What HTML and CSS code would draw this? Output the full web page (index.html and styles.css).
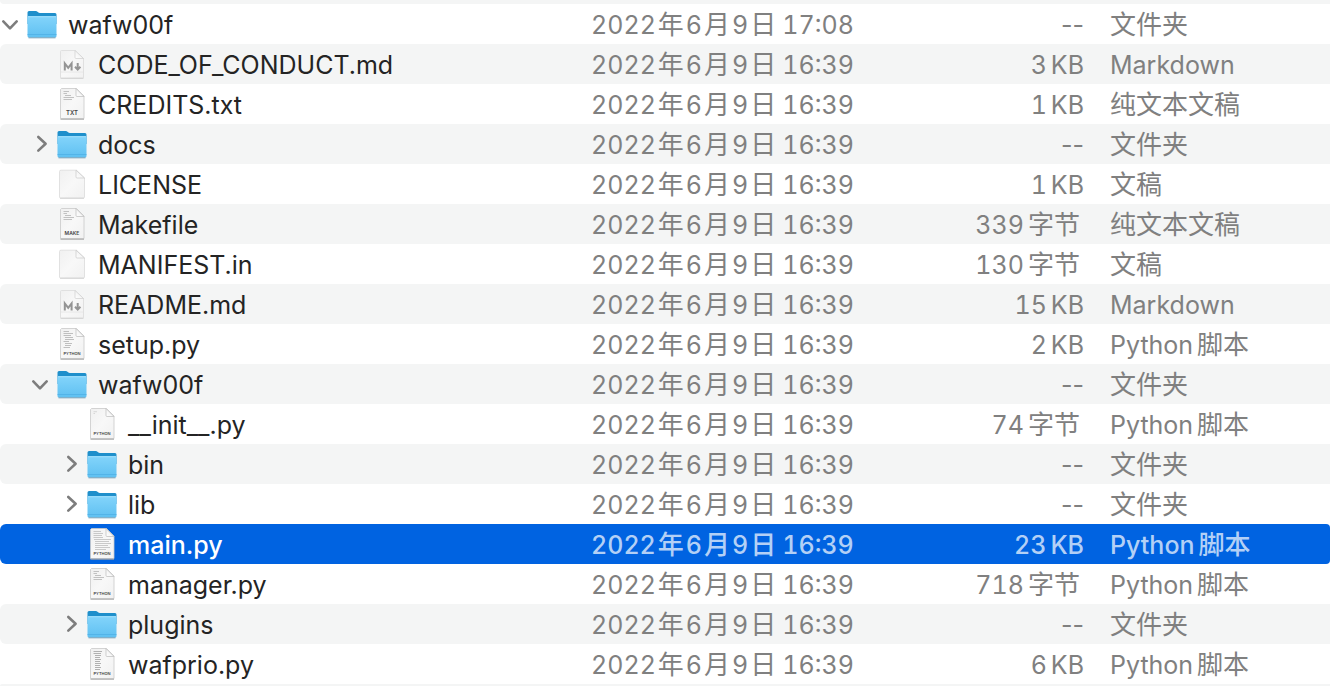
FILE: index.html
```html
<!DOCTYPE html>
<html lang="zh-CN">
<head>
<meta charset="utf-8">
<title>wafw00f</title>
<link rel="stylesheet" href="styles.css">
</head>
<body>
<svg class="defs" aria-hidden="true">
  <defs>
    <linearGradient id="paper" x1="0" y1="0" x2="1" y2="1"><stop offset="0" stop-color="#f0f0f0"/><stop offset=".5" stop-color="#f8f8f8"/><stop offset="1" stop-color="#f1f1f1"/></linearGradient>
    <linearGradient id="fold" x1="0" y1="1" x2="1" y2="0"><stop offset="0" stop-color="#fff"/><stop offset=".5" stop-color="#f4f4f4"/><stop offset="1" stop-color="#d4d4d4"/></linearGradient>
    <linearGradient id="front" x1="0" y1="0" x2="0" y2="1"><stop offset="0" stop-color="#83d4fb"/><stop offset="1" stop-color="#5fc0f1"/></linearGradient>
    <symbol id="folder" viewBox="0 0 32 40">
      <path d="M1.5 10V8.6Q1.5 7 3 7H9.6Q10.8 7 11.8 8.1Q12.8 9 14 9H29Q30.500 9 30.500 10.500V20H1.500Z" fill="#1f8fcb"/>
      <path d="M1.500 13.500Q1.500 12.200 3 12.200H29Q30.500 12.200 30.500 13.500V32Q30.500 33.500 29 33.500H3Q1.500 33.500 1.500 32Z" fill="url(#front)"/>
      <path d="M2 12.700H30" stroke="#a4e1fd"/>
      <path d="M1.500 30.500H30.500" stroke="#4fb0e4" stroke-width=".8"/>
      <path d="M2.500 33.800H29.500" stroke="#6f9fb8"/>
    </symbol>
    <symbol id="page" viewBox="0 0 32 40">
      <path d="M5.500 4.500H20.500L28 12V34.500H4.500V5.500Z" fill="url(#paper)" stroke="#c9c9c9" stroke-width=".8"/>
      <path d="M4.500 35.200H28" stroke="#a4a4a4"/>
      <path d="M20 4.500V11.500Q20 12.500 21 12.500H28Z" fill="url(#fold)" stroke="#bcbcbc" stroke-width=".7"/>
    </symbol>
    <symbol id="blank" viewBox="0 0 32 40">
      <path d="M5 6.200H20.500L28.500 14V33Q28.500 34 27.500 34H4.500Q3.500 34 3.500 33V7.500Q3.500 6.200 5 6.200Z" fill="url(#paper)" stroke="#dadada" stroke-width=".8"/>
      <path d="M4 34.300H28" stroke="#c8c8c8" stroke-width=".7"/>
      <path d="M20 6.200V13Q20 14 21 14H28.500Z" fill="url(#fold)" stroke="#c8c8c8" stroke-width=".7"/>
    </symbol>
    <symbol id="markdown" viewBox="0 0 32 40">
      <path d="M5.500 6.500H19L27.500 14.500V33Q27.500 34.200 26.500 34.200H5.500Q4.500 34.200 4.500 33V7.500Q4.500 6.500 5.500 6.500Z" fill="url(#paper)" stroke="#dadada" stroke-width=".8"/>
      <path d="M4.500 34.300H27.500" stroke="#c8c8c8" stroke-width=".7"/>
      <path d="M19 6.500V13.500Q19 14.500 20 14.500H27.500Z" fill="url(#fold)" stroke="#cfcfcf" stroke-width=".7"/>
      <path d="M5 28H27" stroke="#e4e4e4" stroke-width=".8"/>
      <path d="M8.800 26.500V19.500L12.200 23.800L15.600 19.500V26.500M21.700 19V25M19 22.800L21.700 25.600L24.400 22.800" fill="none" stroke="#949494" stroke-width="2"/>
    </symbol>
    <symbol id="code-short" viewBox="0 0 32 40"><path d="M7.500 7.700H11M7.500 9.500H9" stroke="#c4c4c4" stroke-width=".6"/></symbol>
    <symbol id="code-mid" viewBox="0 0 32 40"><path d="M7.500 7.500H13M7.500 9.500H11M9 11.500H15M7.500 13.500H18M7.500 15.500H16" stroke="#b4b4b4" stroke-width=".8"/></symbol>
    <symbol id="code-long" viewBox="0 0 32 40"><path d="M7.500 7.500H13M7.500 9.500H17M7.500 11.500H15M9 13.500H17M9 15.500H18M7.500 17.500H13M9 19.500H16M9 21.500H15M7.500 23.500H14" stroke="#b0b0b0" stroke-width=".8"/></symbol>
    <symbol id="code-dense" viewBox="0 0 32 40"><path d="M7.500 7.500H15M7.500 9.500H17M7.500 11.500H16M7.500 13.500H17M8 15.500H25M9 17.500H23M9 19.500H25M9 21.500H22M9 23.500H24M9 25.500H20" stroke="#b4b4b4" stroke-width=".7"/></symbol>
    <symbol id="code-list" viewBox="0 0 32 40"><path d="M7.500 7.500H16M7.500 9.500H15M9 11.500H15M9 13.500H14M9 15.500H15M9 17.500H14M9 19.500H15M9 21.500H14M9 23.500H15M9 25.500H14" stroke="#a8a8a8" stroke-width=".9"/></symbol>
    <symbol id="open" viewBox="0 0 20 40"><path d="M3.300 17.400L10 24.300L16.700 17.400" fill="none" stroke="#7d7d7d" stroke-width="2.600" stroke-linecap="round" stroke-linejoin="round"/></symbol>
    <symbol id="closed" viewBox="0 0 20 40"><path d="M8.300 13L15.600 19.800L8.300 26.600" fill="none" stroke="#7d7d7d" stroke-width="2.600" stroke-linecap="round" stroke-linejoin="round"/></symbol>
  </defs>
</svg>
<main class="browser">
<div class="edge edge-top"></div>
<table class="files">
<colgroup><col><col class="col-date"><col class="col-size"><col class="col-kind"></colgroup>
<tbody>
<tr><td><div class="name"><button class="toggle" aria-label="wafw00f"><svg><use href="#open"/></svg></button><svg class="icon"><use href="#folder"/></svg><span class="label">wafw00f</span></div></td><td><time class="date">2022<b>年</b>6<b>月</b>9<b>日</b><span class="clock">17:08</span></time></td><td class="size">--</td><td class="zh">文件夹</td></tr>
<tr><td><div class="name level-1"><span class="toggle"></span><svg class="icon"><use href="#markdown"/></svg><span class="label">CODE_OF_CONDUCT.md</span></div></td><td><time class="date">2022<b>年</b>6<b>月</b>9<b>日</b><span class="clock">16:39</span></time></td><td class="size"><span class="amount">3<span>KB</span></span></td><td>Markdown</td></tr>
<tr><td><div class="name level-1"><span class="toggle"></span><svg class="icon"><use href="#page"/><use href="#code-mid"/><text class="tag tag-txt" x="16" y="31">TXT</text></svg><span class="label">CREDITS.txt</span></div></td><td><time class="date">2022<b>年</b>6<b>月</b>9<b>日</b><span class="clock">16:39</span></time></td><td class="size"><span class="amount">1<span>KB</span></span></td><td class="zh">纯文本文稿</td></tr>
<tr><td><div class="name level-1"><button class="toggle" aria-label="docs"><svg><use href="#closed"/></svg></button><svg class="icon"><use href="#folder"/></svg><span class="label">docs</span></div></td><td><time class="date">2022<b>年</b>6<b>月</b>9<b>日</b><span class="clock">16:39</span></time></td><td class="size">--</td><td class="zh">文件夹</td></tr>
<tr><td><div class="name level-1"><span class="toggle"></span><svg class="icon"><use href="#blank"/></svg><span class="label">LICENSE</span></div></td><td><time class="date">2022<b>年</b>6<b>月</b>9<b>日</b><span class="clock">16:39</span></time></td><td class="size"><span class="amount">1<span>KB</span></span></td><td class="zh">文稿</td></tr>
<tr><td><div class="name level-1"><span class="toggle"></span><svg class="icon"><use href="#page"/><use href="#code-mid"/><text class="tag tag-make" x="16" y="31">MAKE</text></svg><span class="label">Makefile</span></div></td><td><time class="date">2022<b>年</b>6<b>月</b>9<b>日</b><span class="clock">16:39</span></time></td><td class="size bytes"><span class="amount">339<b>字节</b></span></td><td class="zh">纯文本文稿</td></tr>
<tr><td><div class="name level-1"><span class="toggle"></span><svg class="icon"><use href="#blank"/></svg><span class="label">MANIFEST.in</span></div></td><td><time class="date">2022<b>年</b>6<b>月</b>9<b>日</b><span class="clock">16:39</span></time></td><td class="size bytes"><span class="amount">130<b>字节</b></span></td><td class="zh">文稿</td></tr>
<tr><td><div class="name level-1"><span class="toggle"></span><svg class="icon"><use href="#markdown"/></svg><span class="label">README.md</span></div></td><td><time class="date">2022<b>年</b>6<b>月</b>9<b>日</b><span class="clock">16:39</span></time></td><td class="size"><span class="amount">15<span>KB</span></span></td><td>Markdown</td></tr>
<tr><td><div class="name level-1"><span class="toggle"></span><svg class="icon"><use href="#page"/><use href="#code-long"/><text class="tag" x="16" y="31">PYTHON</text></svg><span class="label">setup.py</span></div></td><td><time class="date">2022<b>年</b>6<b>月</b>9<b>日</b><span class="clock">16:39</span></time></td><td class="size"><span class="amount">2<span>KB</span></span></td><td><span class="kind">Python<b>脚本</b></span></td></tr>
<tr><td><div class="name level-1"><button class="toggle" aria-label="wafw00f"><svg><use href="#open"/></svg></button><svg class="icon"><use href="#folder"/></svg><span class="label">wafw00f</span></div></td><td><time class="date">2022<b>年</b>6<b>月</b>9<b>日</b><span class="clock">16:39</span></time></td><td class="size">--</td><td class="zh">文件夹</td></tr>
<tr><td><div class="name level-2"><span class="toggle"></span><svg class="icon"><use href="#page"/><use href="#code-short"/><text class="tag" x="16" y="31">PYTHON</text></svg><span class="label">__init__.py</span></div></td><td><time class="date">2022<b>年</b>6<b>月</b>9<b>日</b><span class="clock">16:39</span></time></td><td class="size bytes"><span class="amount">74<b>字节</b></span></td><td><span class="kind">Python<b>脚本</b></span></td></tr>
<tr><td><div class="name level-2"><button class="toggle" aria-label="bin"><svg><use href="#closed"/></svg></button><svg class="icon"><use href="#folder"/></svg><span class="label">bin</span></div></td><td><time class="date">2022<b>年</b>6<b>月</b>9<b>日</b><span class="clock">16:39</span></time></td><td class="size">--</td><td class="zh">文件夹</td></tr>
<tr><td><div class="name level-2"><button class="toggle" aria-label="lib"><svg><use href="#closed"/></svg></button><svg class="icon"><use href="#folder"/></svg><span class="label">lib</span></div></td><td><time class="date">2022<b>年</b>6<b>月</b>9<b>日</b><span class="clock">16:39</span></time></td><td class="size">--</td><td class="zh">文件夹</td></tr>
<tr class="selected" aria-selected="true"><td><div class="name level-2"><span class="toggle"></span><svg class="icon"><use href="#page"/><use href="#code-dense"/><text class="tag" x="16" y="31">PYTHON</text></svg><span class="label">main.py</span></div></td><td><time class="date">2022<b>年</b>6<b>月</b>9<b>日</b><span class="clock">16:39</span></time></td><td class="size"><span class="amount">23<span>KB</span></span></td><td><span class="kind">Python<b>脚本</b></span></td></tr>
<tr><td><div class="name level-2"><span class="toggle"></span><svg class="icon"><use href="#page"/><use href="#code-mid"/><text class="tag" x="16" y="31">PYTHON</text></svg><span class="label">manager.py</span></div></td><td><time class="date">2022<b>年</b>6<b>月</b>9<b>日</b><span class="clock">16:39</span></time></td><td class="size bytes"><span class="amount">718<b>字节</b></span></td><td><span class="kind">Python<b>脚本</b></span></td></tr>
<tr><td><div class="name level-2"><button class="toggle" aria-label="plugins"><svg><use href="#closed"/></svg></button><svg class="icon"><use href="#folder"/></svg><span class="label">plugins</span></div></td><td><time class="date">2022<b>年</b>6<b>月</b>9<b>日</b><span class="clock">16:39</span></time></td><td class="size">--</td><td class="zh">文件夹</td></tr>
<tr><td><div class="name level-2"><span class="toggle"></span><svg class="icon"><use href="#page"/><use href="#code-list"/><text class="tag" x="16" y="31">PYTHON</text></svg><span class="label">wafprio.py</span></div></td><td><time class="date">2022<b>年</b>6<b>月</b>9<b>日</b><span class="clock">16:39</span></time></td><td class="size"><span class="amount">6<span>KB</span></span></td><td><span class="kind">Python<b>脚本</b></span></td></tr>
</tbody>
</table>
<div class="edge edge-bottom"></div>
</main>
</body>
</html>
```
FILE: styles.css
```css
* { box-sizing: border-box; }
body {
  margin: 0;
  background: #fff;
  color: #242424;
  font: 25px/38px Inter, "Noto Sans CJK SC", sans-serif;
}
.defs { position: absolute; width: 0; height: 0; }
.edge { background: #f4f5f5; }
.edge-top { height: 4px; border-bottom-left-radius: 4px; }
.edge-bottom { height: 2px; border-top-left-radius: 2px; }

.files {
  width: 100%;
  table-layout: fixed;
  border-collapse: separate;
  border-spacing: 0;
}
.col-date { width: 339px; }
.col-size { width: 180px; }
.col-kind { width: 220px; }
.files td {
  height: 40px;
  padding: 2px 0 0;
  white-space: nowrap;
  color: #808080;
}
.files td:first-child { padding: 0; color: #242424; border-radius: 6px 0 0 6px; }
.files tr:nth-child(even) td { background: #f4f5f5; }
.files .size { padding-right: 26px; text-align: right; }
.files .bytes { padding-right: 30px; }
.files b { font-size: 26px; font-weight: 400; }
.files .zh { font-size: 26px; }

.name { display: flex; align-items: center; }
.level-1 { padding-left: 30px; }
.level-2 { padding-left: 60px; }
.label { padding-top: 2px; }
.toggle {
  flex: none;
  width: 20px;
  height: 40px;
  margin-right: 6px;
  padding: 0;
  border: 0;
  background: none;
}
.toggle svg { display: block; width: 20px; height: 40px; }
.icon { flex: none; width: 32px; height: 40px; margin-right: 10px; }
.tag {
  fill: #444;
  font-size: 4px;
  font-weight: 600;
  text-anchor: middle;
}
.tag-txt { font-size: 6px; }
.tag-make { font-size: 5px; }

.date, .amount, .kind { display: inline-flex; gap: 4px; vertical-align: top; }
.date, .amount { font-variant-numeric: tabular-nums; }
.date { gap: 2px; }
.clock { margin-left: 4px; }

.files tr.selected td { background: #0063e1; color: #b3d0f6; }
.files tr.selected td:first-child { color: #fff; font-weight: 500; }
.files tr.selected td:last-child { border-radius: 0 4px 4px 0; }
.selected .date, .selected .amount, .selected .kind, .files .selected b { font-weight: 500; }
```
